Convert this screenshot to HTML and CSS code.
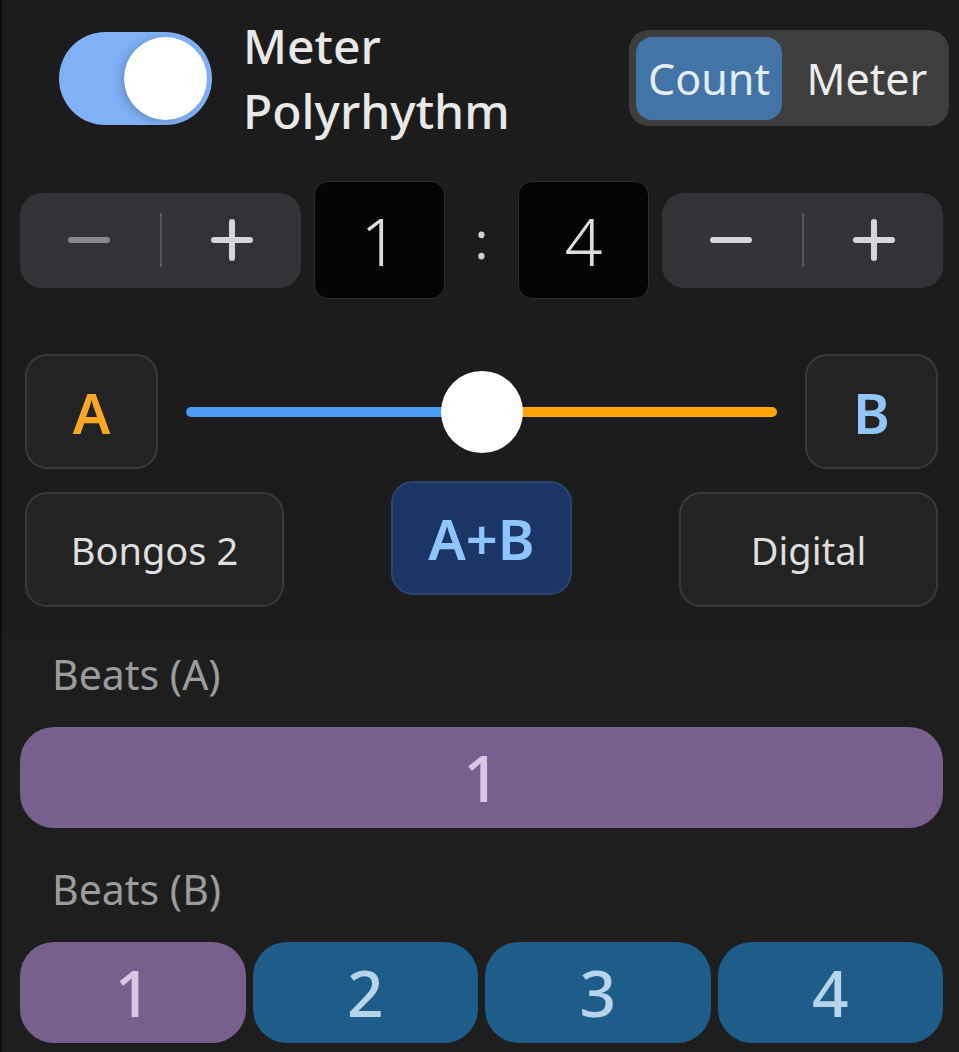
FILE: index.html
```html
<!DOCTYPE html>
<html>
<head>
<meta charset="utf-8">
<link rel="stylesheet" href="styles.css">
</head>
<body>
<div class="app">
  <section class="controls">
    <div class="row-top">
      <div class="toggle"><div class="knob"></div></div>
      <div class="title">Meter<br>Polyrhythm</div>
      <div class="segmented">
        <div class="seg active">Count</div>
        <div class="seg">Meter</div>
      </div>
    </div>

    <div class="row-ratio">
      <div class="stepper">
        <span class="step minus disabled"></span>
        <span class="divider"></span>
        <span class="step plus"></span>
      </div>
      <div class="numbox">1</div>
      <div class="colon">:</div>
      <div class="numbox">4</div>
      <div class="stepper">
        <span class="step minus"></span>
        <span class="divider"></span>
        <span class="step plus"></span>
      </div>
    </div>

    <div class="row-slider">
      <div class="btn letter a">A</div>
      <div class="slider">
        <div class="track left"></div>
        <div class="track right"></div>
        <div class="thumb"></div>
      </div>
      <div class="btn letter b">B</div>
    </div>

    <div class="row-sounds">
      <div class="btn sound">Bongos 2</div>
      <div class="btn mix">A+B</div>
      <div class="btn sound">Digital</div>
    </div>
  </section>

  <section class="beats">
    <div class="label">Beats (A)</div>
    <div class="beat-row">
      <div class="beat purple">1</div>
    </div>
    <div class="label second">Beats (B)</div>
    <div class="beat-row">
      <div class="beat purple">1</div>
      <div class="beat blue">2</div>
      <div class="beat blue">3</div>
      <div class="beat blue">4</div>
    </div>
  </section>
</div>
</body>
</html>
```

FILE: styles.css
```css
* { box-sizing: border-box; }

html, body {
  margin: 0;
  padding: 0;
  background: #1e1e1e;
  font-family: "Noto Sans", "Open Sans", sans-serif;
  color: #e6e6e6;
}

.app {
  width: 959px;
  height: 1052px;
  overflow: hidden;
  border-left: 2px solid #0c0c0c;
}

.controls {
  background: #1c1c1c;
  padding: 13px 0 30px 0;
}

/* Row 1 */
.row-top {
  display: flex;
  align-items: center;
  padding: 0 10px 0 57px;
}

.toggle {
  width: 153px;
  height: 93px;
  border-radius: 47px;
  background: #80b1f6;
  position: relative;
  flex-shrink: 0;
}

.toggle .knob {
  position: absolute;
  right: 5px;
  top: 5px;
  width: 83px;
  height: 83px;
  border-radius: 50%;
  background: #ffffff;
  box-shadow: -4px 2px 8px rgba(0, 0, 0, 0.18);
}

.title {
  margin-left: 31px;
  font-size: 48px;
  line-height: 65px;
  font-weight: 500;
  color: #e8e8e8;
}

.segmented {
  margin-left: auto;
  width: 320px;
  height: 96px;
  background: #3e3e3e;
  border-radius: 20px;
  display: flex;
  align-items: center;
  padding: 0 7px;
}

.seg {
  height: 83px;
  display: flex;
  align-items: center;
  justify-content: center;
  font-size: 43px;
  color: #ececec;
  border-radius: 16px;
}

.seg.active {
  width: 146px;
  background: #4274a7;
  color: #e4ecf4;
}

.seg:not(.active) {
  flex: 1;
  padding-left: 10px;
}

/* Row 2 */
.row-ratio {
  display: flex;
  align-items: center;
  margin-top: 38px;
  padding: 0 16px 0 18px;
  gap: 13px;
}

.stepper {
  width: 281px;
  height: 95px;
  background: #333337;
  border-radius: 22px;
  display: flex;
  align-items: center;
  justify-content: space-between;
  padding: 0 48px;
}

.step {
  width: 42px;
  height: 42px;
  position: relative;
}

.step::before,
.step::after {
  content: "";
  position: absolute;
  background: #d6d6d8;
  border-radius: 3px;
}

.step::before {
  left: 0;
  right: 0;
  top: 18px;
  height: 6px;
}

.step.plus::after {
  top: 0;
  bottom: 0;
  left: 18px;
  width: 6px;
}

.step.disabled::before {
  background: #8a8a8c;
}

.divider {
  width: 2px;
  height: 54px;
  background: #56565a;
}

.numbox {
  width: 131px;
  height: 118px;
  background: #040404;
  border: 1px solid #2e2e2e;
  border-radius: 14px;
  display: flex;
  align-items: center;
  justify-content: center;
  font-size: 66px;
  font-weight: 300;
  color: #dcdcdc;
}

.colon {
  width: 47px;
  text-align: center;
  font-size: 50px;
  color: #d0d0d0;
  line-height: 1;
}

/* Row 3 */
.row-slider {
  display: flex;
  align-items: center;
  margin-top: 55px;
  padding: 0 21px 0 23px;
}

.btn {
  background: #232323;
  border: 2px solid #3a3a3a;
  border-radius: 22px;
  display: flex;
  align-items: center;
  justify-content: center;
}

.letter {
  width: 133px;
  height: 115px;
  font-size: 56px;
  font-weight: 600;
}

.letter.a { color: #f9a825; }
.letter.b { color: #90c6f8; }

.slider {
  flex: 1;
  margin: 0 28px;
  height: 82px;
  position: relative;
  display: flex;
  align-items: center;
}

.track {
  height: 10px;
  border-radius: 5px;
}

.track.left {
  width: 50%;
  background: #4a9df3;
  border-radius: 5px 0 0 5px;
}

.track.right {
  width: 50%;
  background: #ffa40c;
  border-radius: 0 5px 5px 0;
}

.thumb {
  position: absolute;
  left: calc(50% - 41px);
  top: 0;
  width: 82px;
  height: 82px;
  border-radius: 50%;
  background: #ffffff;
}

/* Row 4 */
.row-sounds {
  display: flex;
  align-items: flex-start;
  justify-content: space-between;
  margin-top: 12px;
  padding: 0 21px 0 23px;
}

.sound {
  width: 259px;
  height: 115px;
  margin-top: 11px;
  font-size: 38px;
  color: #dedede;
}

.mix {
  width: 181px;
  height: 114px;
  background: #1a3566;
  border-color: #2b4570;
  font-size: 56px;
  font-weight: 600;
  color: #8ec5ff;
}

/* Beats */
.beats {
  padding: 10px 16px 0 18px;
}

.label {
  padding-left: 32px;
  font-size: 41px;
  line-height: 54px;
  color: #9c9c9c;
}

.label.second {
  margin-top: 34px;
}

.beat-row {
  display: flex;
  gap: 7px;
  margin-top: 26px;
}

.beat {
  flex: 1;
  height: 101px;
  border-radius: 34px;
  display: flex;
  align-items: center;
  justify-content: center;
  font-size: 64px;
  font-weight: 500;
}

.beat.purple {
  background: #77608e;
  color: #d8c8e4;
}

.beat.blue {
  background: #1e5d8a;
  color: #b8d4ea;
}
```
